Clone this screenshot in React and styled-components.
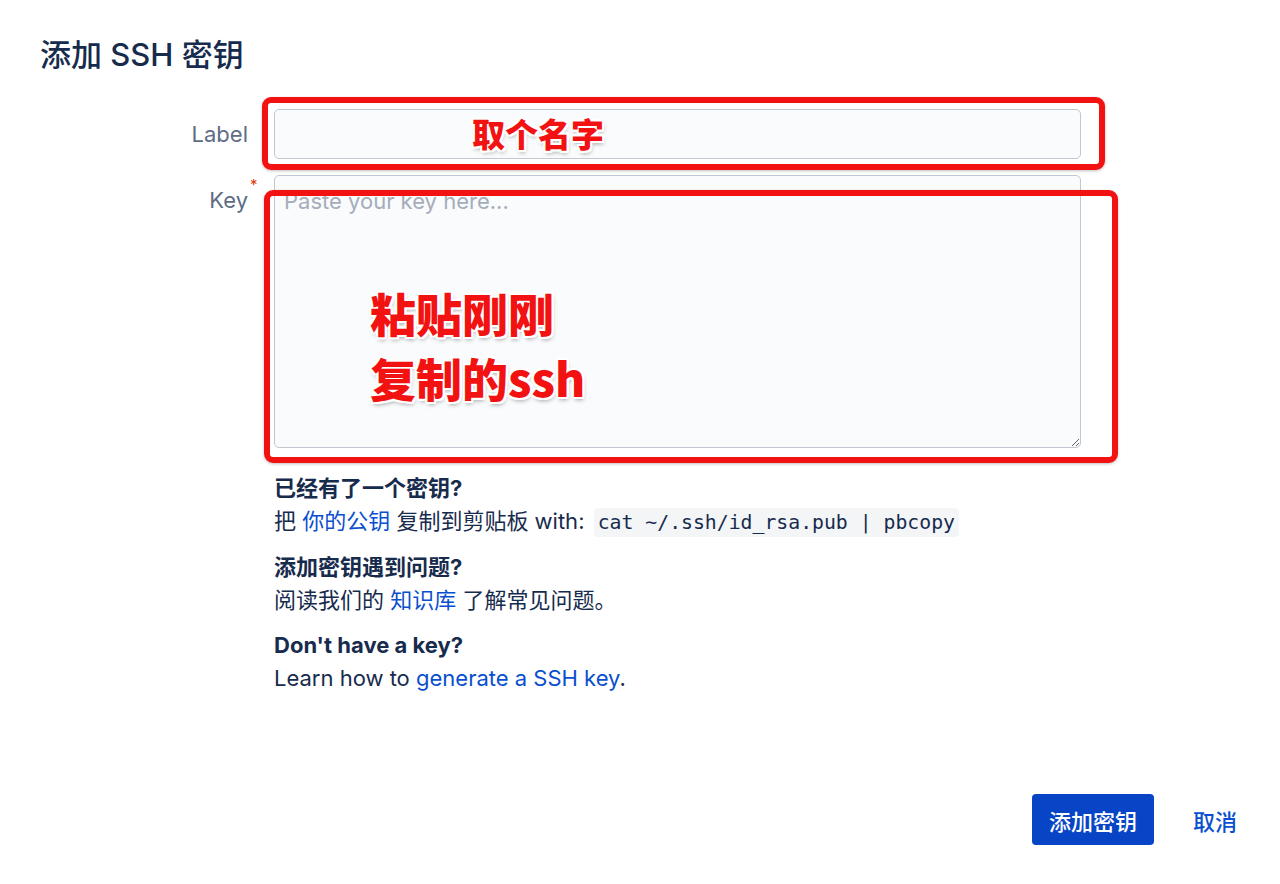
import React from "react";
import styled, { createGlobalStyle } from "styled-components";

const GlobalStyle = createGlobalStyle`
  html, body {
    margin: 0;
    padding: 0;
    background: #ffffff;
  }
  body {
    font-family: "Inter", "Noto Sans CJK SC", sans-serif;
    color: #172b4d;
  }
`;

const Page = styled.div`
  min-height: 100vh;
  box-sizing: border-box;
  display: flex;
  flex-direction: column;
  padding: 36px 26px 39px 40px;
`;

const Title = styled.h1`
  margin: 0;
  font-size: 31px;
  line-height: 37px;
  font-weight: 500;
  color: #172b4d;
`;

const Form = styled.div`
  display: grid;
  grid-template-columns: 208px 807px;
  column-gap: 26px;
  row-gap: 16px;
  margin-top: 36px;
`;

const FieldLabel = styled.label`
  position: relative;
  text-align: right;
  font-size: 22px;
  line-height: 34px;
  padding-top: 8px;
  color: #5e6c84;
`;

const Required = styled.span`
  position: absolute;
  top: 2px;
  margin-left: 2px;
  color: #de350b;
  font-size: 15px;
  line-height: 15px;
`;

const Field = styled.div`
  position: relative;
`;

const TextInput = styled.input`
  display: block;
  box-sizing: border-box;
  width: 100%;
  height: 50px;
  border: 1px solid #c1c7d0;
  border-radius: 5px;
  background: #fafbfc;
  font: inherit;
  font-size: 22px;
  padding: 0 10px;
  outline: none;
`;

const TextArea = styled.textarea`
  display: block;
  box-sizing: border-box;
  width: 100%;
  height: 273px;
  border: 1px solid #c1c7d0;
  border-radius: 5px;
  background: #fafbfc;
  font-family: "Inter", "Noto Sans CJK SC", sans-serif;
  font-size: 22px;
  line-height: 34px;
  padding: 8px 9px;
  outline: none;
  &::placeholder {
    color: #a5adba;
  }
`;

const Annotation = styled.div`
  position: absolute;
  top: ${(p) => p.$top}px;
  left: ${(p) => p.$left}px;
  right: ${(p) => p.$right}px;
  bottom: ${(p) => p.$bottom}px;
  border: 6px solid #f21212;
  border-radius: 9px;
  box-shadow: 0 1px 3px rgba(0, 0, 0, 0.25);
  pointer-events: none;
`;

const AnnotationText = styled.div`
  position: absolute;
  left: ${(p) => p.$left}px;
  top: ${(p) => p.$top}px;
  font-family: "Noto Sans CJK SC", sans-serif;
  font-weight: 900;
  font-size: ${(p) => p.$size}px;
  line-height: ${(p) => p.$lineHeight}px;
  color: #f21212;
  white-space: nowrap;
  text-shadow: 2px 0 0 #fff, -2px 0 0 #fff, 0 2px 0 #fff, 0 -2px 0 #fff,
    2px 2px 0 #fff, -2px -2px 0 #fff, 2px -2px 0 #fff, -2px 2px 0 #fff,
    1px 3px 4px rgba(0, 0, 0, 0.35);
`;

const Help = styled.div`
  grid-column: 2;
  margin-top: 8px;
  font-size: 22px;
  line-height: 33px;
`;

const HelpSection = styled.div`
  & + & {
    margin-top: 12px;
  }
`;

const HelpTitle = styled.div`
  font-weight: 700;
  color: #172b4d;
`;

const HelpLine = styled.div`
  color: #172b4d;
`;

const Link = styled.a`
  color: #0a4fcf;
  text-decoration: none;
`;

const Code = styled.code`
  font-family: "DejaVu Sans Mono", "Liberation Mono", monospace;
  font-size: 19.8px;
  background: #f4f5f7;
  border-radius: 4px;
  padding: 3px 4px;
  margin-left: 3px;
`;

const Footer = styled.div`
  margin-top: auto;
  display: flex;
  justify-content: flex-end;
  align-items: center;
  gap: 22px;
`;

const PrimaryButton = styled.button`
  height: 51px;
  padding: 0 17px;
  border: none;
  border-radius: 4px;
  background: #0845c6;
  color: #ffffff;
  font-family: "Noto Sans CJK SC", sans-serif;
  font-size: 22px;
  font-weight: 500;
`;

const SubtleButton = styled.button`
  height: 51px;
  padding: 0 17px;
  border: none;
  background: transparent;
  color: #0a4fcf;
  font-family: "Noto Sans CJK SC", sans-serif;
  font-size: 22px;
  font-weight: 500;
`;

export default function App() {
  return (
    <>
      <GlobalStyle />
      <Page>
        <Title>添加 SSH 密钥</Title>
        <Form>
          <FieldLabel>Label</FieldLabel>
          <Field>
            <TextInput type="text" />
            <Annotation $top={-12} $left={-12} $right={-24} $bottom={-11}>
              <AnnotationText $left={204} $top={4} $size={33} $lineHeight={52}>
                取个名字
              </AnnotationText>
            </Annotation>
          </Field>

          <FieldLabel>
            Key<Required>*</Required>
          </FieldLabel>
          <Field>
            <TextArea placeholder="Paste your key here..." />
            <Annotation $top={15} $left={-10} $right={-37} $bottom={-15}>
              <AnnotationText $left={100} $top={84} $size={46} $lineHeight={65}>
                粘贴刚刚
                <br />
                复制的ssh
              </AnnotationText>
            </Annotation>
          </Field>

          <Help>
            <HelpSection>
              <HelpTitle>已经有了一个密钥?</HelpTitle>
              <HelpLine>
                把 <Link href="#">你的公钥</Link> 复制到剪贴板 with:{" "}
                <Code>cat ~/.ssh/id_rsa.pub | pbcopy</Code>
              </HelpLine>
            </HelpSection>
            <HelpSection>
              <HelpTitle>添加密钥遇到问题?</HelpTitle>
              <HelpLine>
                阅读我们的 <Link href="#">知识库</Link> 了解常见问题。
              </HelpLine>
            </HelpSection>
            <HelpSection>
              <HelpTitle>Don't have a key?</HelpTitle>
              <HelpLine>
                Learn how to <Link href="#">generate a SSH key</Link>.
              </HelpLine>
            </HelpSection>
          </Help>
        </Form>
        <Footer>
          <PrimaryButton>添加密钥</PrimaryButton>
          <SubtleButton>取消</SubtleButton>
        </Footer>
      </Page>
    </>
  );
}
